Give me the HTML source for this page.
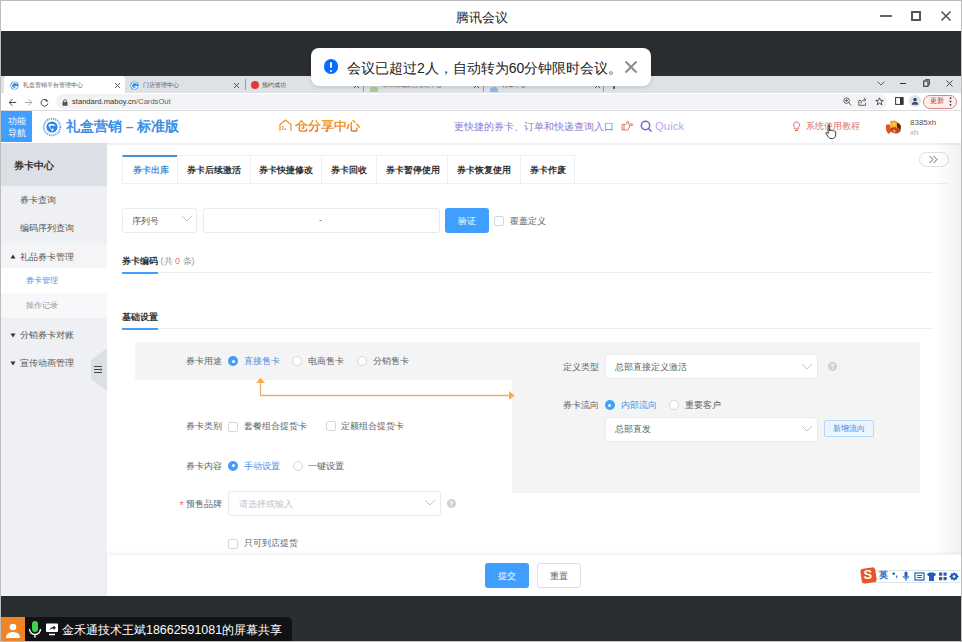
<!DOCTYPE html>
<html><head><meta charset="utf-8">
<style>
*{margin:0;padding:0;box-sizing:border-box}
html,body{width:962px;height:642px;overflow:hidden;background:#fff;font-family:"Liberation Sans",sans-serif;position:relative}
.a{position:absolute}
.t{position:absolute;white-space:nowrap;line-height:1}
</style></head><body>
<!-- window border -->
<div class="a" style="left:0;top:0;width:962px;height:642px;border:1px solid #bdbdbd;z-index:50;pointer-events:none"></div>
<!-- title bar -->
<div class="a" style="left:0;top:0;width:962px;height:31px;background:#fff"></div>
<div class="t" style="left:455.5px;top:11px;font-size:13.1px;color:#222">腾讯会议</div>
<!-- dark bar -->
<div class="a" style="left:0;top:31px;width:962px;height:45px;background:#2b2e31"></div>
<!-- chrome tab strip -->
<div class="a" style="left:0;top:76px;width:962px;height:17px;background:#dee1e6"></div>
<div class="a" style="left:4px;top:76px;width:121px;height:17px;background:#fff;border-radius:4px 4px 0 0"></div>
<!-- toolbar -->
<div class="a" style="left:0;top:93px;width:962px;height:18px;background:#fff;border-bottom:1px solid #dadce0"></div>
<div class="a" style="left:55.5px;top:94px;width:831.5px;height:15px;background:#f1f3f4;border-radius:8px"></div>
<div class="t" style="left:72px;top:97.5px;font-size:7.6px;color:#333">standard.maboy.cn<span style="color:#666">/CardsOut</span></div>

<!-- chrome tabs content -->
<svg class="a" style="left:10px;top:80.5px" width="9" height="9" viewBox="0 0 11 11"><circle cx="5.5" cy="5.5" r="5" fill="#3d8fe0"/><path d="M8.5 3.5A3.6 3.6 0 1 0 8.8 7H5.5" stroke="#fff" stroke-width="1.3" fill="none"/></svg>
<div class="t" style="left:23px;top:82px;font-size:6px;color:#555">礼盒营销平台管理中心</div>
<svg class="a" style="left:114px;top:82px" width="7" height="7" viewBox="0 0 7 7"><path d="M1 1L6 6M6 1L1 6" stroke="#444" stroke-width="0.9"/></svg>
<svg class="a" style="left:130px;top:80.5px" width="9" height="9" viewBox="0 0 11 11"><circle cx="5.5" cy="5.5" r="5" fill="#3d8fe0"/><path d="M8.5 3.5A3.6 3.6 0 1 0 8.8 7H5.5" stroke="#fff" stroke-width="1.3" fill="none"/></svg>
<div class="t" style="left:143px;top:82px;font-size:6px;color:#555">门店管理中心</div>
<svg class="a" style="left:233px;top:82px" width="7" height="7" viewBox="0 0 7 7"><path d="M1 1L6 6M6 1L1 6" stroke="#444" stroke-width="0.9"/></svg>
<div class="a" style="left:245px;top:79px;width:1px;height:11px;background:#9aa0a6"></div>
<div class="a" style="left:250.5px;top:81px;width:8px;height:8px;border-radius:50%;background:#e03a3a"></div>
<div class="t" style="left:262px;top:82px;font-size:6px;color:#555">预约成功</div>
<div class="a" style="left:363px;top:86px;width:1px;height:6px;background:#9aa0a6"></div>
<div class="a" style="left:370px;top:87px;width:8px;height:5px;background:#a6cf8c;border-radius:2px 2px 0 0"></div>
<div class="a" style="left:483px;top:86px;width:1px;height:6px;background:#9aa0a6"></div>
<div class="a" style="left:490px;top:87px;width:8px;height:5px;background:#8ab8e8;border-radius:4px 4px 0 0"></div>
<div class="a" style="left:603px;top:86px;width:1px;height:6px;background:#9aa0a6"></div>
<svg class="a" style="left:877px;top:81px" width="8" height="5" viewBox="0 0 8 5"><path d="M0.5 0.5L4 4L7.5 0.5" stroke="#555" stroke-width="0.9" fill="none"/></svg>
<div class="a" style="left:900px;top:83px;width:6px;height:1px;background:#333"></div>
<svg class="a" style="left:923px;top:79px" width="7" height="8" viewBox="0 0 7 8"><rect x="0.7" y="2" width="4.3" height="5.3" stroke="#333" stroke-width="1.1" fill="none"/><path d="M2.5 1.5V0.6h3.9v5H5" stroke="#333" stroke-width="0.9" fill="none"/></svg>
<svg class="a" style="left:945.5px;top:80px" width="7" height="7" viewBox="0 0 7 7"><path d="M0.5 0.5L6.5 6.5M6.5 0.5L0.5 6.5" stroke="#333" stroke-width="0.9"/></svg>

<svg class="a" style="left:353px;top:82px" width="7" height="7" viewBox="0 0 7 7"><path d="M1 1L6 6M6 1L1 6" stroke="#555" stroke-width="0.9"/></svg>
<div class="t" style="left:382px;top:82px;font-size:6px;color:#666">华禾商城后台管理中心</div>
<svg class="a" style="left:473px;top:82px" width="7" height="7" viewBox="0 0 7 7"><path d="M1 1L6 6M6 1L1 6" stroke="#555" stroke-width="0.9"/></svg>
<div class="t" style="left:502px;top:82px;font-size:6px;color:#666">订单中心</div>
<svg class="a" style="left:594px;top:82px" width="7" height="7" viewBox="0 0 7 7"><path d="M1 1L6 6M6 1L1 6" stroke="#555" stroke-width="0.9"/></svg>
<div class="a" style="left:613px;top:86px;width:1.5px;height:3px;background:#666"></div>
<!-- toolbar icons -->
<svg class="a" style="left:8px;top:97.5px" width="9" height="9" viewBox="0 0 9 9"><path d="M8.2 4.5H1.2M4.5 1.2L1.2 4.5L4.5 7.8" stroke="#444" stroke-width="1" fill="none"/></svg>
<svg class="a" style="left:24px;top:97.5px" width="9" height="9" viewBox="0 0 9 9"><path d="M0.8 4.5H7.8M4.5 1.2L7.8 4.5L4.5 7.8" stroke="#aaa" stroke-width="1" fill="none"/></svg>
<svg class="a" style="left:40px;top:97.5px" width="9" height="9" viewBox="0 0 9 9"><path d="M7.5 3.2A3.4 3.4 0 1 0 7.8 5.5" stroke="#444" stroke-width="1" fill="none"/><path d="M5.5 0.8V3.6H8.3z" fill="#444"/></svg>
<svg class="a" style="left:61.5px;top:98.5px" width="6" height="7" viewBox="0 0 6 7"><rect x="0.5" y="3" width="5" height="3.8" fill="#555"/><path d="M1.5 3.2V2.2a1.5 1.5 0 0 1 3 0v1" stroke="#555" stroke-width="0.9" fill="none"/></svg>
<svg class="a" style="left:843px;top:97px" width="9" height="9" viewBox="0 0 9 9"><circle cx="3.6" cy="3.6" r="2.8" stroke="#555" stroke-width="0.9" fill="none"/><path d="M5.7 5.7L8.3 8.3M2.2 3.6h2.8M3.6 2.2v2.8" stroke="#555" stroke-width="0.9"/></svg>
<svg class="a" style="left:858px;top:97px" width="9" height="9" viewBox="0 0 9 9"><path d="M3 3.5H0.8V8.3H7.5V6" stroke="#555" stroke-width="0.9" fill="none"/><path d="M3 6.5c0-2.5 1.8-3.7 4.5-3.7M6 0.8L7.8 2.8L6 4.7" stroke="#555" stroke-width="0.9" fill="none"/></svg>
<svg class="a" style="left:874.5px;top:96.5px" width="9" height="9" viewBox="0 0 9 9"><path d="M4.5 0.8L5.6 3.4H8.3L6.1 5L6.9 7.9L4.5 6.2L2.1 7.9L2.9 5L0.7 3.4H3.4z" stroke="#444" stroke-width="0.9" fill="none"/></svg>
<svg class="a" style="left:894.5px;top:97px" width="9" height="8" viewBox="0 0 9 8"><rect x="0.6" y="0.6" width="7.5" height="6.8" stroke="#333" stroke-width="1" fill="none"/><rect x="5" y="0.6" width="3.1" height="6.8" fill="#333"/></svg>
<div class="a" style="left:908.5px;top:95px;width:12px;height:12px;border-radius:50%;background:#dfe3ea"></div>
<svg class="a" style="left:910.5px;top:97px" width="8" height="8" viewBox="0 0 8 8"><circle cx="4" cy="2.6" r="1.8" fill="#3c4a6a"/><path d="M0.8 7.8c0-2.2 1.6-3 3.2-3s3.2.8 3.2 3z" fill="#3c4a6a"/></svg>
<div class="a" style="left:923px;top:94.5px;width:34px;height:14.5px;border-radius:7px;border:1px solid #d08a88;background:#fbeeed"></div>
<div class="t" style="left:930px;top:98px;font-size:6.5px;color:#c0393a">更新</div>
<svg class="a" style="left:949px;top:97px" width="3" height="9" viewBox="0 0 3 9"><circle cx="1.5" cy="1.2" r="0.9" fill="#333"/><circle cx="1.5" cy="4.5" r="0.9" fill="#333"/><circle cx="1.5" cy="7.8" r="0.9" fill="#333"/></svg>
<!-- app header -->
<div class="a" style="left:1px;top:111px;width:31px;height:31px;background:#409eff"></div>
<div class="t" style="left:8px;top:114.8px;font-size:9px;line-height:12.5px;color:#fff;white-space:normal;width:20px">功能导航</div>
<div class="a" style="left:0;top:143px;width:962px;height:2px;background:#f0f0f2;box-shadow:0 0 1px #f4f4f6"></div>

<!-- window controls -->
<div class="a" style="left:880px;top:15px;width:12px;height:2px;background:#666"></div>
<div class="a" style="left:911px;top:11px;width:10px;height:10px;border:2px solid #555"></div>
<svg class="a" style="left:940px;top:10px" width="12" height="12" viewBox="0 0 12 12"><path d="M1.5 1.5L10.5 10.5M10.5 1.5L1.5 10.5" stroke="#555" stroke-width="1.6"/></svg>
<!-- header items -->
<svg class="a" style="left:41.5px;top:116.5px" width="20" height="20" viewBox="0 0 20 20"><circle cx="10" cy="10" r="8.3" fill="none" stroke="#4a98e8" stroke-width="2" stroke-dasharray="1.2 0.9" opacity="0.85"/><circle cx="10" cy="10" r="5.6" fill="#2f86e0"/><path d="M6.2 8.2c1.8-1.6 5.2-1.8 7.4 0.2l-1.8.6c-1.2-.6-2.8-.6-4 .2l1.8 3.5 1.2-1.8 1 1.5-1.6 2.2z" fill="#fff"/></svg>
<div class="t" style="left:66px;top:119.5px;font-size:13.6px;font-weight:900;color:#3a8ee6">礼盒营销 – 标准版</div>
<svg class="a" style="left:279px;top:119px" width="13" height="13" viewBox="0 0 13 13"><path d="M1 12V5.5L6.5 1L12 5.5V12" stroke="#e8903a" stroke-width="1.2" fill="none"/><rect x="3" y="7" width="1.5" height="1.5" fill="#e8903a"/><rect x="3" y="9.5" width="1.5" height="1.5" fill="#e8903a"/><rect x="5.5" y="9.5" width="1.5" height="1.5" fill="#e8903a"/></svg>
<div class="t" style="left:294.5px;top:120px;font-size:12.7px;font-weight:bold;color:#ec8a2c;background:linear-gradient(#f3a532,#e56a2a);-webkit-background-clip:text;background-clip:text;-webkit-text-fill-color:transparent;padding-bottom:1px">仓分享中心</div>
<div class="t" style="left:454px;top:122px;font-size:10px;color:#8a76d4">更快捷的券卡、订单和快递查询入口</div>
<svg class="a" style="left:621px;top:120px" width="13" height="11" viewBox="0 0 13 11"><path d="M1 4.5H3V10H1z" stroke="#e07a6a" stroke-width="1" fill="none"/><path d="M3 4.5h1.5L6.5 1.2c.6-.3 1.2.1 1 .8L7 4h4.2c.8 0 .8 1.5 0 1.5H8.5V7c0 .6-.3 1-.8 1H7.5v1c0 .6-.4 1-1 1H3" stroke="#e07a6a" stroke-width="1" fill="none"/></svg>
<svg class="a" style="left:640px;top:120px" width="13" height="13" viewBox="0 0 13 13"><circle cx="5.5" cy="5.5" r="4.2" stroke="#7466cc" stroke-width="1.5" fill="none"/><path d="M8.5 8.5L11.5 11.5" stroke="#7466cc" stroke-width="1.5"/></svg>
<div class="t" style="left:655px;top:120.5px;font-size:11.4px;color:#b4acea">Quick</div>
<svg class="a" style="left:792px;top:121px" width="9" height="11" viewBox="0 0 9 11"><path d="M4.5 1a3 3 0 0 0-1.8 5.4V8h3.6V6.4A3 3 0 0 0 4.5 1zM3 9.5h3" stroke="#e0706a" stroke-width="1" fill="none"/></svg>
<div class="t" style="left:806px;top:122px;font-size:9px;color:#e0706a">系统使用教程</div>
<svg class="a" style="left:884px;top:117px" width="20" height="20" viewBox="0 0 20 20"><path d="M2 8.5c1-1.5 3-1.5 4-.5l2 6-3 2.5c-2-.5-3.5-3-3-8z" fill="#e2561e"/><path d="M6 4.5c2-1.5 5-1.5 7 0l1 4.5-3 2.5-4-1z" fill="#f2a21a"/><path d="M8 6c1.5-.8 3-.5 4 .5l-1 3-2.5-.5z" fill="#f8c850"/><path d="M13 5.5c2 .5 3.5 2 4 4l-.5 3.5-3.5-2.5z" fill="#5a2a12"/><path d="M7 11l4-1 6 2.5c-.5 2.5-2.5 4-5 4-2 0-4-1-5.5-2.5z" fill="#b84a20"/><path d="M9 12.5l2 .5 1 1.5-1.5 1-1.5-1z" fill="#e8a060"/><path d="M3.5 14.5l2 1-1 1.5z" fill="#d04050"/></svg>
<div class="t" style="left:910px;top:119px;font-size:8px;color:#555">8385xh</div>
<div class="t" style="left:910px;top:129px;font-size:8px;color:#aaa">xh</div>
<svg class="a" style="left:825px;top:124px" width="12" height="15" viewBox="0 0 12 15"><path d="M3.5 1.2c.7 0 1.2.5 1.2 1.2V7l.4-.1c.3-.8 1.8-.8 2.1 0 .4-.6 1.7-.5 1.9.3.5-.3 1.6-.1 1.6.9v2.8c0 2-1.3 3.6-3.4 3.6H6c-1.2 0-2-.6-2.7-1.6L1 9.6c-.4-.7.3-1.5 1-1.1l1.2.9V2.4c0-.7.5-1.2 1.2-1.2z" fill="#fff" stroke="#222" stroke-width="0.9"/></svg>
<!-- sidebar -->
<div class="a" style="left:1px;top:143px;width:106px;height:453px;background:#eef0f3"></div>
<div class="a" style="left:1px;top:143px;width:106px;height:43px;background:#dcdfe6"></div>
<div class="t" style="left:14px;top:160.5px;font-size:9.8px;font-weight:900;color:#303030">券卡中心</div>

<div class="t" style="left:20px;top:195.5px;font-size:9px;color:#555">券卡查询</div>
<div class="t" style="left:20px;top:223.5px;font-size:9px;color:#555">编码序列查询</div>
<div class="a" style="left:1px;top:243px;width:106px;height:25px;background:#f4f5f7"></div>
<svg class="a" style="left:9.5px;top:253.5px" width="6" height="5" viewBox="0 0 6 5"><path d="M3 0.5L5.5 4.5H0.5z" fill="#333"/></svg>
<div class="t" style="left:20px;top:252.5px;font-size:9px;color:#555">礼品券卡管理</div>
<div class="a" style="left:1px;top:268px;width:106px;height:25px;background:#fff"></div>
<div class="t" style="left:26px;top:277px;font-size:8.2px;color:#4a90e2">券卡管理</div>
<div class="a" style="left:1px;top:293px;width:106px;height:25px;background:#f7f8fa"></div>
<div class="t" style="left:26px;top:302px;font-size:8.2px;color:#999">操作记录</div>
<svg class="a" style="left:9.5px;top:332.5px" width="6" height="5" viewBox="0 0 6 5"><path d="M0.5 0.5H5.5L3 4.5z" fill="#333"/></svg>
<div class="t" style="left:20px;top:331px;font-size:9px;color:#555">分销券卡对账</div>
<svg class="a" style="left:9.5px;top:360.5px" width="6" height="5" viewBox="0 0 6 5"><path d="M0.5 0.5H5.5L3 4.5z" fill="#333"/></svg>
<div class="t" style="left:20px;top:359px;font-size:9px;color:#555">宣传动画管理</div>
<svg class="a" style="left:91px;top:348px" width="16" height="43" viewBox="0 0 16 43"><path d="M16 0L0 12V31L16 43z" fill="#dcdfe6"/><path d="M3 18.5h8M3 21.5h6M3 24.5h8" stroke="#444" stroke-width="1.1"/><path d="M9.5 20l2 1.5-2 1.5z" fill="#444"/></svg>

<!-- main tabs -->
<div class="a" style="left:122px;top:155px;width:453px;height:29px;border:1px solid #eceff4;border-bottom:none"></div>
<div class="a" style="left:122px;top:183px;width:825px;height:1px;background:#eceff4"></div>
<div class="a" style="left:122px;top:155px;width:55px;height:28px;background:#fff;border-top:2px solid #4a8fd8;border-left:1px solid #eceff4"></div>
<div class="a" style="left:177px;top:155px;width:1px;height:28px;background:#eceff4"></div>
<div class="a" style="left:250px;top:155px;width:1px;height:28px;background:#eceff4"></div>
<div class="a" style="left:321px;top:155px;width:1px;height:28px;background:#eceff4"></div>
<div class="a" style="left:376px;top:155px;width:1px;height:28px;background:#eceff4"></div>
<div class="a" style="left:447px;top:155px;width:1px;height:28px;background:#eceff4"></div>
<div class="a" style="left:520px;top:155px;width:1px;height:28px;background:#eceff4"></div>
<div class="t" style="left:133px;top:165.8px;font-size:9px;font-weight:bold;color:#4a8fd8">券卡出库</div>
<div class="t" style="left:187px;top:165.8px;font-size:9px;font-weight:bold;color:#303133">券卡后续激活</div>
<div class="t" style="left:259px;top:165.8px;font-size:9px;font-weight:bold;color:#303133">券卡快捷修改</div>
<div class="t" style="left:331px;top:165.8px;font-size:9px;font-weight:bold;color:#303133">券卡回收</div>
<div class="t" style="left:386px;top:165.8px;font-size:9px;font-weight:bold;color:#303133">券卡暂停使用</div>
<div class="t" style="left:457px;top:165.8px;font-size:9px;font-weight:bold;color:#303133">券卡恢复使用</div>
<div class="t" style="left:530px;top:165.8px;font-size:9px;font-weight:bold;color:#303133">券卡作废</div>
<div class="a" style="left:919px;top:152px;width:30px;height:15px;border:1px solid #e0e0e0;border-radius:8px"></div>
<svg class="a" style="left:928px;top:155px" width="11" height="9" viewBox="0 0 11 9"><path d="M1.5 1L5 4.5L1.5 8M5.5 1L9 4.5L5.5 8" stroke="#666" stroke-width="1" fill="none"/></svg>
<!-- search row -->
<div class="a" style="left:122px;top:208px;width:75px;height:25px;border:1px solid #e8eaee;border-radius:3px"></div>
<div class="t" style="left:132px;top:216.5px;font-size:9px;color:#606266">序列号</div>
<svg class="a" style="left:180.5px;top:215.0px" width="12" height="7" viewBox="0 0 12 7"><path d="M1 1L6 6L11 1" stroke="#c0c4cc" stroke-width="1" fill="none"/></svg>
<div class="a" style="left:203px;top:208px;width:237px;height:25px;border:1px solid #e8eaee;border-radius:3px"></div>
<div class="t" style="left:319px;top:216px;font-size:9px;color:#606266">-</div>
<div class="a" style="left:445px;top:208px;width:44px;height:25px;background:#409eff;border-radius:3px"></div>
<div class="t" style="left:458px;top:216.5px;font-size:9px;color:#fff">验证</div>
<div class="a" style="left:494px;top:216px;width:10px;height:10px;border:1px solid #d4d8de;border-radius:2px;background:#fff"></div>
<div class="t" style="left:510px;top:216.5px;font-size:9px;color:#606266">覆盖定义</div>
<!-- section titles -->
<div class="t" style="left:122px;top:257px;font-size:9px;font-weight:bold;color:#303133">券卡编码 <span style="font-weight:normal;color:#999">(共 <span style="color:#f56c6c">0</span> 条)</span></div>
<div class="a" style="left:122px;top:272px;width:811px;height:1px;background:#ebeef5"></div>
<div class="a" style="left:122px;top:272px;width:35.5px;height:2px;background:#409eff"></div>
<div class="t" style="left:122px;top:313px;font-size:9px;font-weight:bold;color:#303133">基础设置</div>
<div class="a" style="left:122px;top:328px;width:811px;height:1px;background:#ebeef5"></div>
<div class="a" style="left:122px;top:327.5px;width:35.5px;height:2px;background:#409eff"></div>
<!-- form panel -->
<div class="a" style="left:135px;top:342px;width:377px;height:37.5px;background:#f4f4f4"></div>
<div class="a" style="left:512px;top:342px;width:408px;height:151px;background:#f4f4f4"></div>
<div class="t" style="left:186px;top:356.5px;font-size:9px;color:#606266;">券卡用途</div><div class="a" style="left:228.0px;top:356.0px;width:10px;height:10px;border-radius:50%;background:#409eff"></div><div class="a" style="left:231.5px;top:359.5px;width:3px;height:3px;border-radius:50%;background:#fff"></div><div class="t" style="left:244px;top:356.5px;font-size:9px;color:#4592e6;">直接售卡</div><div class="a" style="left:292.0px;top:356.0px;width:10px;height:10px;border-radius:50%;border:1px solid #d4d8de;background:#fff"></div><div class="t" style="left:307.5px;top:356.5px;font-size:9px;color:#606266;">电商售卡</div><div class="a" style="left:356.5px;top:356.0px;width:10px;height:10px;border-radius:50%;border:1px solid #d4d8de;background:#fff"></div><div class="t" style="left:372.5px;top:356.5px;font-size:9px;color:#606266;">分销售卡</div>
<svg class="a" style="left:255px;top:377px" width="262" height="22" viewBox="0 0 262 22"><path d="M5.5 4V18.5H254" stroke="#f0b064" stroke-width="1.3" fill="none"/><path d="M1 6L5.5 0.8L10 6z" fill="#f0ad5a"/><path d="M254 14L259.5 18.5L254 23z" fill="#f0ad5a"/></svg>
<div class="t" style="left:186px;top:421.5px;font-size:9px;color:#606266;">券卡类别</div><div class="a" style="left:228px;top:421.5px;width:10px;height:10px;border:1px solid #d4d8de;border-radius:2px;background:#fff"></div><div class="t" style="left:244px;top:421.5px;font-size:9px;color:#606266;">套餐组合提货卡</div><div class="a" style="left:326px;top:421px;width:10px;height:10px;border:1px solid #d4d8de;border-radius:2px;background:#fff"></div><div class="t" style="left:341px;top:421.5px;font-size:9px;color:#606266;">定额组合提货卡</div>
<div class="t" style="left:186px;top:461.5px;font-size:9px;color:#606266;">券卡内容</div><div class="a" style="left:228.0px;top:460.5px;width:10px;height:10px;border-radius:50%;background:#409eff"></div><div class="a" style="left:231.5px;top:464.0px;width:3px;height:3px;border-radius:50%;background:#fff"></div><div class="t" style="left:244px;top:461.5px;font-size:9px;color:#4592e6;">手动设置</div><div class="a" style="left:292.5px;top:460.5px;width:10px;height:10px;border-radius:50%;border:1px solid #d4d8de;background:#fff"></div><div class="t" style="left:308px;top:461.5px;font-size:9px;color:#606266;">一键设置</div>
<div class="t" style="left:179.5px;top:500px;font-size:11px;color:#f56c6c;">*</div><div class="t" style="left:186px;top:499.5px;font-size:9px;color:#606266;">预售品牌</div><div class="a" style="left:228px;top:491px;width:213px;height:25px;border:1px solid #e8eaee;border-radius:3px;background:#fff"></div><div class="t" style="left:238.5px;top:499.5px;font-size:9px;color:#c0c4cc;">请选择或输入</div><svg class="a" style="left:424.0px;top:499.0px" width="12" height="7" viewBox="0 0 12 7"><path d="M1 1L6 6L11 1" stroke="#c0c4cc" stroke-width="1" fill="none"/></svg><div class="a" style="left:447.0px;top:498.5px;width:9px;height:9px;border-radius:50%;background:#cdd0d6;color:#fff;font-size:7px;line-height:9px;text-align:center;font-weight:bold">?</div>
<div class="a" style="left:228px;top:538.5px;width:10px;height:10px;border:1px solid #d4d8de;border-radius:2px;background:#fff"></div><div class="t" style="left:244px;top:538.5px;font-size:9px;color:#606266;">只可到店提货</div>
<div class="t" style="left:563px;top:363px;font-size:9px;color:#606266;">定义类型</div><div class="a" style="left:605px;top:354px;width:213px;height:25px;border:1px solid #e8eaee;border-radius:3px;background:#fff"></div><div class="t" style="left:615px;top:363px;font-size:9px;color:#606266;">总部直接定义激活</div><svg class="a" style="left:800.5px;top:362.5px" width="12" height="7" viewBox="0 0 12 7"><path d="M1 1L6 6L11 1" stroke="#c0c4cc" stroke-width="1" fill="none"/></svg><div class="a" style="left:828.0px;top:362.0px;width:9px;height:9px;border-radius:50%;background:#cdd0d6;color:#fff;font-size:7px;line-height:9px;text-align:center;font-weight:bold">?</div>
<div class="t" style="left:563px;top:400.5px;font-size:9px;color:#606266;">券卡流向</div><div class="a" style="left:604.5px;top:400.0px;width:10px;height:10px;border-radius:50%;background:#409eff"></div><div class="a" style="left:608.0px;top:403.5px;width:3px;height:3px;border-radius:50%;background:#fff"></div><div class="t" style="left:620.5px;top:400.5px;font-size:9px;color:#4592e6;">内部流向</div><div class="a" style="left:669.0px;top:400.0px;width:10px;height:10px;border-radius:50%;border:1px solid #d4d8de;background:#fff"></div><div class="t" style="left:685px;top:400.5px;font-size:9px;color:#606266;">重要客户</div>
<div class="a" style="left:605px;top:417px;width:213px;height:25px;border:1px solid #e8eaee;border-radius:3px;background:#fff"></div><div class="t" style="left:615px;top:425px;font-size:9px;color:#606266;">总部直发</div><svg class="a" style="left:800.5px;top:424.5px" width="12" height="7" viewBox="0 0 12 7"><path d="M1 1L6 6L11 1" stroke="#c0c4cc" stroke-width="1" fill="none"/></svg>
<div class="a" style="left:824px;top:420px;width:50px;height:17px;border:1px solid #b3d8ff;border-radius:2px;background:#ecf5ff"></div><div class="t" style="left:833px;top:424.5px;font-size:8px;color:#3d86d6;">新增流向</div>
<div class="a" style="left:936px;top:143px;width:25px;height:411px;background:linear-gradient(to right,rgba(0,0,0,0),rgba(0,0,0,0.055))"></div>
<!-- footer -->
<div class="a" style="left:107px;top:555px;width:855px;height:41px;background:#fff;box-shadow:0 -2px 4px rgba(0,0,0,.06)"></div>

<div class="a" style="left:485px;top:563px;width:44px;height:25px;background:#409eff;border-radius:3px"></div>
<div class="t" style="left:498px;top:572px;font-size:9px;color:#fff">提交</div>
<div class="a" style="left:537px;top:563px;width:44px;height:25px;border:1px solid #dcdfe6;border-radius:3px;background:#fff"></div>
<div class="t" style="left:550px;top:572px;font-size:9px;color:#606266">重置</div>
<!-- sogou -->
<div class="a" style="left:874px;top:570px;width:88px;height:13px;background:#fff;border:1px solid #dde3ea;border-right:none"></div>
<div class="a" style="left:861px;top:567.5px;width:14.5px;height:14.5px;background:#e8542a;border-radius:3px;transform:rotate(-8deg)"></div>
<div class="t" style="left:863.5px;top:567.5px;font-size:13px;font-weight:bold;color:#fff">S</div>
<div class="t" style="left:879px;top:571px;font-size:9px;font-weight:bold;color:#1f5fb8">英</div>
<div class="t" style="left:892px;top:570px;font-size:9px;font-weight:bold;color:#1f5fb8">•,</div>
<svg class="a" style="left:902px;top:571px" width="80" height="11" viewBox="0 0 80 11"><rect x="2.5" y="0.5" width="3" height="6" rx="1.5" fill="#1f5fb8"/><path d="M1.5 5a2.5 2.5 0 0 0 5 0M4 8v2" stroke="#1f5fb8" stroke-width="1" fill="none"/><rect x="13" y="2" width="9" height="7" stroke="#1f5fb8" stroke-width="1.2" fill="none"/><path d="M15 4.5h5M15 6.5h5" stroke="#1f5fb8" stroke-width="1"/><path d="M25 3l2.5-1.5h4L34 3l-1 2h-1v5h-5V5h-1z" fill="#1f5fb8"/><rect x="37" y="1.5" width="3.2" height="3.2" fill="#1f5fb8"/><rect x="41.5" y="1.5" width="3.2" height="3.2" fill="#1f5fb8"/><rect x="37" y="6" width="3.2" height="3.2" fill="#1f5fb8"/><rect x="41.5" y="6" width="3.2" height="3.2" fill="#1f5fb8"/><path d="M52 1l1 1.6 1.8-.4.4 1.8L57 5.5l-1.8 1.5-.4 1.8-1.8-.4L52 10l-1-1.6-1.8.4-.4-1.8L47 5.5l1.8-1.5.4-1.8 1.8.4z" fill="#1f5fb8"/><circle cx="52" cy="5.5" r="1.3" fill="#fff"/></svg>
<!-- bottom dark -->
<div class="a" style="left:0;top:596px;width:962px;height:46px;background:#2b2e31"></div>
<div class="a" style="left:0;top:617px;width:292px;height:25px;background:#111214;border-radius:0 5px 0 0"></div>
<div class="a" style="left:1px;top:617px;width:24px;height:25px;background:#f08326"></div>
<div class="t" style="left:62px;top:623.5px;font-size:12.45px;color:#fff">金禾通技术王斌18662591081的屏幕共享</div>

<svg class="a" style="left:4px;top:621px" width="18" height="18" viewBox="0 0 18 18"><circle cx="9" cy="6" r="3.3" fill="#fff"/><path d="M2 17c0-4 3-6 7-6s7 2 7 6z" fill="#fff"/></svg>
<svg class="a" style="left:28px;top:620px" width="14" height="19" viewBox="0 0 14 19"><rect x="4" y="1" width="6" height="11" rx="3" fill="#3fd24a"/><path d="M1.5 9a5.5 5.5 0 0 0 11 0M7 14.5v3" stroke="#fff" stroke-width="1.4" fill="none"/></svg>
<svg class="a" style="left:45px;top:622px" width="14" height="14" viewBox="0 0 14 14"><rect x="1" y="1.5" width="12" height="8.5" rx="1" fill="#fff"/><path d="M4 12.5h6" stroke="#fff" stroke-width="1.5"/><path d="M4.5 8c.5-2 2-3 4-3V3.5L11 5.8 8.5 8V6.5c-1.5 0-3 .5-4 1.5z" fill="#222"/></svg>
<!-- popup -->
<div class="a" style="left:311px;top:48px;width:340px;height:38px;background:#fff;border-radius:8px;box-shadow:0 1px 4px rgba(0,0,0,.15)"></div>
<div class="a" style="left:323.7px;top:59.3px;width:14.6px;height:14.6px;border-radius:50%;background:#0a6cff"></div>
<div class="t" style="left:347px;top:61px;font-size:14px;color:#222">会议已超过2人，自动转为60分钟限时会议。</div>

<div class="a" style="left:330px;top:61.5px;width:2.4px;height:6.5px;background:#fff;border-radius:1px"></div><div class="a" style="left:330px;top:69.5px;width:2.4px;height:2.4px;background:#fff;border-radius:1px"></div>
<svg class="a" style="left:624px;top:60px" width="14" height="14" viewBox="0 0 14 14"><path d="M1.5 1.5L12.5 12.5M12.5 1.5L1.5 12.5" stroke="#888c94" stroke-width="2"/></svg>
</body></html>
